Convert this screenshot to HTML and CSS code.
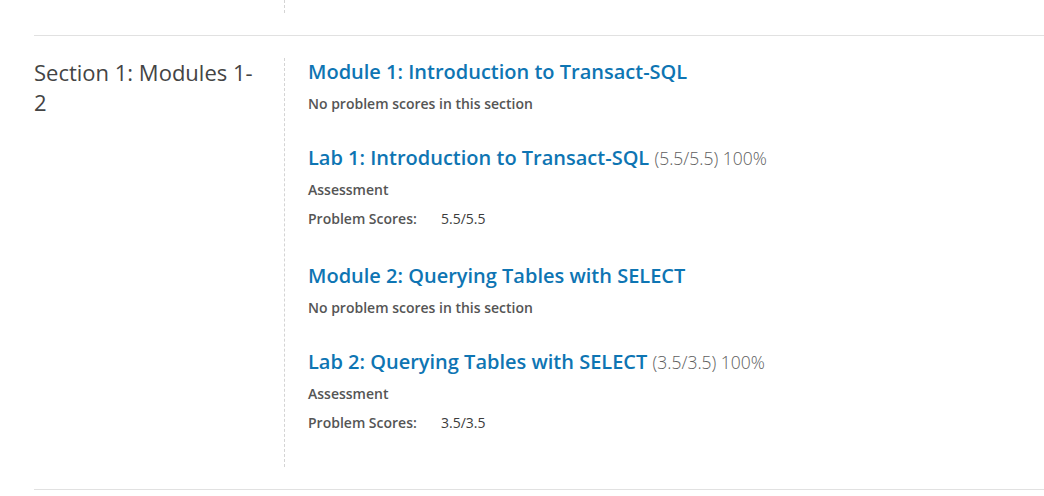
FILE: index.html
```html
<!DOCTYPE html>
<html>
<head>
<meta charset="utf-8">
<link rel="stylesheet" href="styles.css">
</head>
<body>
<div class="chapters">
  <div class="chapter-tail">
    <div class="tail-spacer"></div>
    <div class="tail-line"></div>
  </div>
  <section class="chapter">
    <h2 class="chapter-title">Section 1: Modules 1-2</h2>
    <div class="sections">
      <div class="sub">
        <h3 class="sub-title"><a href="#">Module 1: Introduction to Transact-SQL</a></h3>
        <p class="no-scores">No problem scores in this section</p>
      </div>
      <div class="sub">
        <h3 class="sub-title"><a href="#">Lab 1: Introduction to Transact-SQL</a> <span class="score">(5.5/5.5) 100%</span></h3>
        <p class="kind">Assessment</p>
        <dl class="scores"><dt>Problem Scores:</dt><dd>5.5/5.5</dd></dl>
      </div>
      <div class="sub">
        <h3 class="sub-title"><a href="#">Module 2: Querying Tables with SELECT</a></h3>
        <p class="no-scores">No problem scores in this section</p>
      </div>
      <div class="sub">
        <h3 class="sub-title"><a href="#">Lab 2: Querying Tables with SELECT</a> <span class="score">(3.5/3.5) 100%</span></h3>
        <p class="kind">Assessment</p>
        <dl class="scores"><dt>Problem Scores:</dt><dd>3.5/3.5</dd></dl>
      </div>
    </div>
  </section>
  <div class="chapter-end"></div>
</div>
</body>
</html>
```
FILE: styles.css
```css
html, body {
  margin: 0;
  padding: 0;
  background: #fff;
}
body {
  font-family: "Open Sans", "Liberation Sans", sans-serif;
  color: #3c3c3c;
}
.chapters {
  padding-left: 34px;
}
.chapter-tail {
  display: flex;
  height: 13px;
  margin-bottom: 22px;
}
.tail-spacer {
  width: 250px;
}
.tail-line {
  border-left: 1px dashed #d4d4d4;
}
.chapter {
  display: flex;
  border-top: 1px solid #e1e1e1;
  padding: 22px 0;
}
.chapter-end {
  border-top: 1px solid #e1e1e1;
}
.chapter-title {
  flex: 0 0 250px;
  box-sizing: border-box;
  padding-right: 30px;
  margin: -1px 0 0;
  font-size: 22px;
  font-weight: 400;
  line-height: 30px;
  color: #444;
}
.sections {
  border-left: 1px dashed #d4d4d4;
  padding-left: 23px;
  padding-bottom: 31px;
}
.sub {
  display: flex;
  flex-direction: column;
  margin-bottom: 30px;
}
.sub:last-child {
  margin-bottom: 0;
}
.sub-title {
  margin: 0;
  font-size: 20px;
  font-weight: 600;
  line-height: 28px;
}
.sub-title a {
  color: #0e75b3;
  text-decoration: none;
}
.score {
  font-size: 17.5px;
  font-weight: 300;
  color: #5e5e5e;
}
.no-scores, .kind {
  margin: 8px 0 0;
  font-size: 14px;
  font-weight: 600;
  line-height: 20px;
  color: #555;
}
.scores {
  display: flex;
  margin: 9px 0 3px;
  font-size: 14px;
  line-height: 20px;
}
.scores dt {
  font-weight: 600;
  color: #555;
  width: 133px;
}
.scores dd {
  margin: 0;
  color: #3c3c3c;
}
```
